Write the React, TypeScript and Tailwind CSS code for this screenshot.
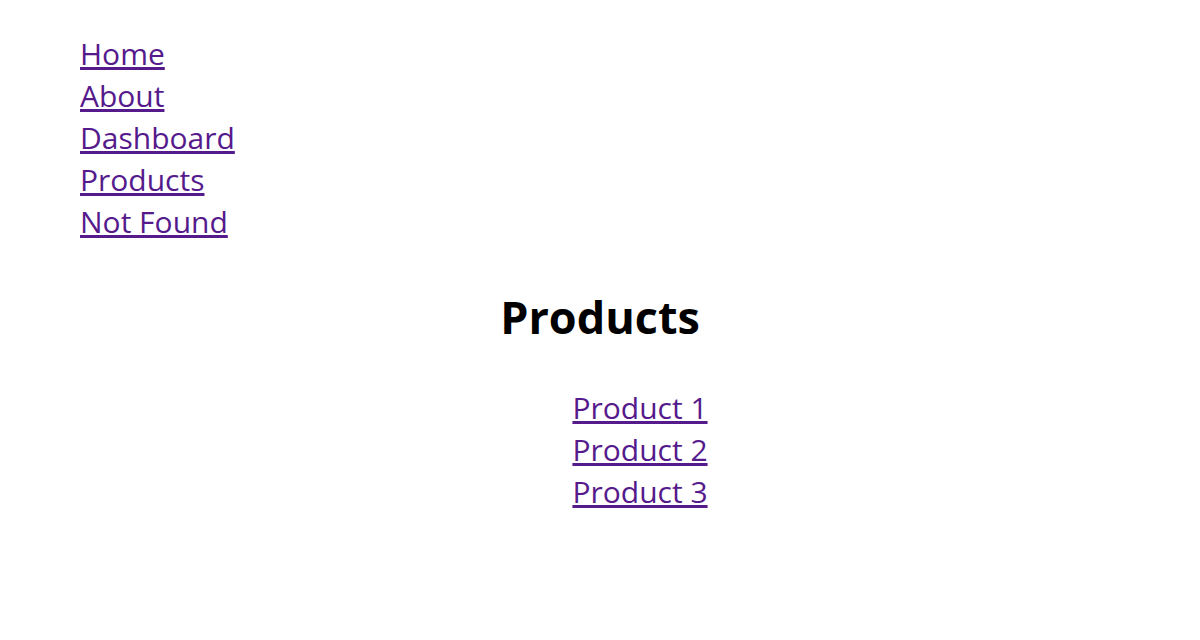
export default function App() {
  const nav = ["Home", "About", "Dashboard", "Products", "Not Found"];
  const products = ["Product 1", "Product 2", "Product 3"];

  return (
    <div className="min-h-[640px] bg-white pt-[33px] font-['Open_Sans',sans-serif] text-black">
      <nav className="flex flex-col items-start pl-[80px] text-[30px] leading-[42px]">
        {nav.map((item) => (
          <a key={item} href="#" className="text-[#551a8b] underline">
            {item}
          </a>
        ))}
      </nav>
      <h1 className="mt-[46px] text-center text-[45px] font-bold leading-[56px]">Products</h1>
      <ul className="mt-[42px] flex flex-col items-center pl-[80px] text-[30px] leading-[42px]">
        {products.map((item) => (
          <li key={item}>
            <a href="#" className="text-[#551a8b] underline">
              {item}
            </a>
          </li>
        ))}
      </ul>
    </div>
  );
}
